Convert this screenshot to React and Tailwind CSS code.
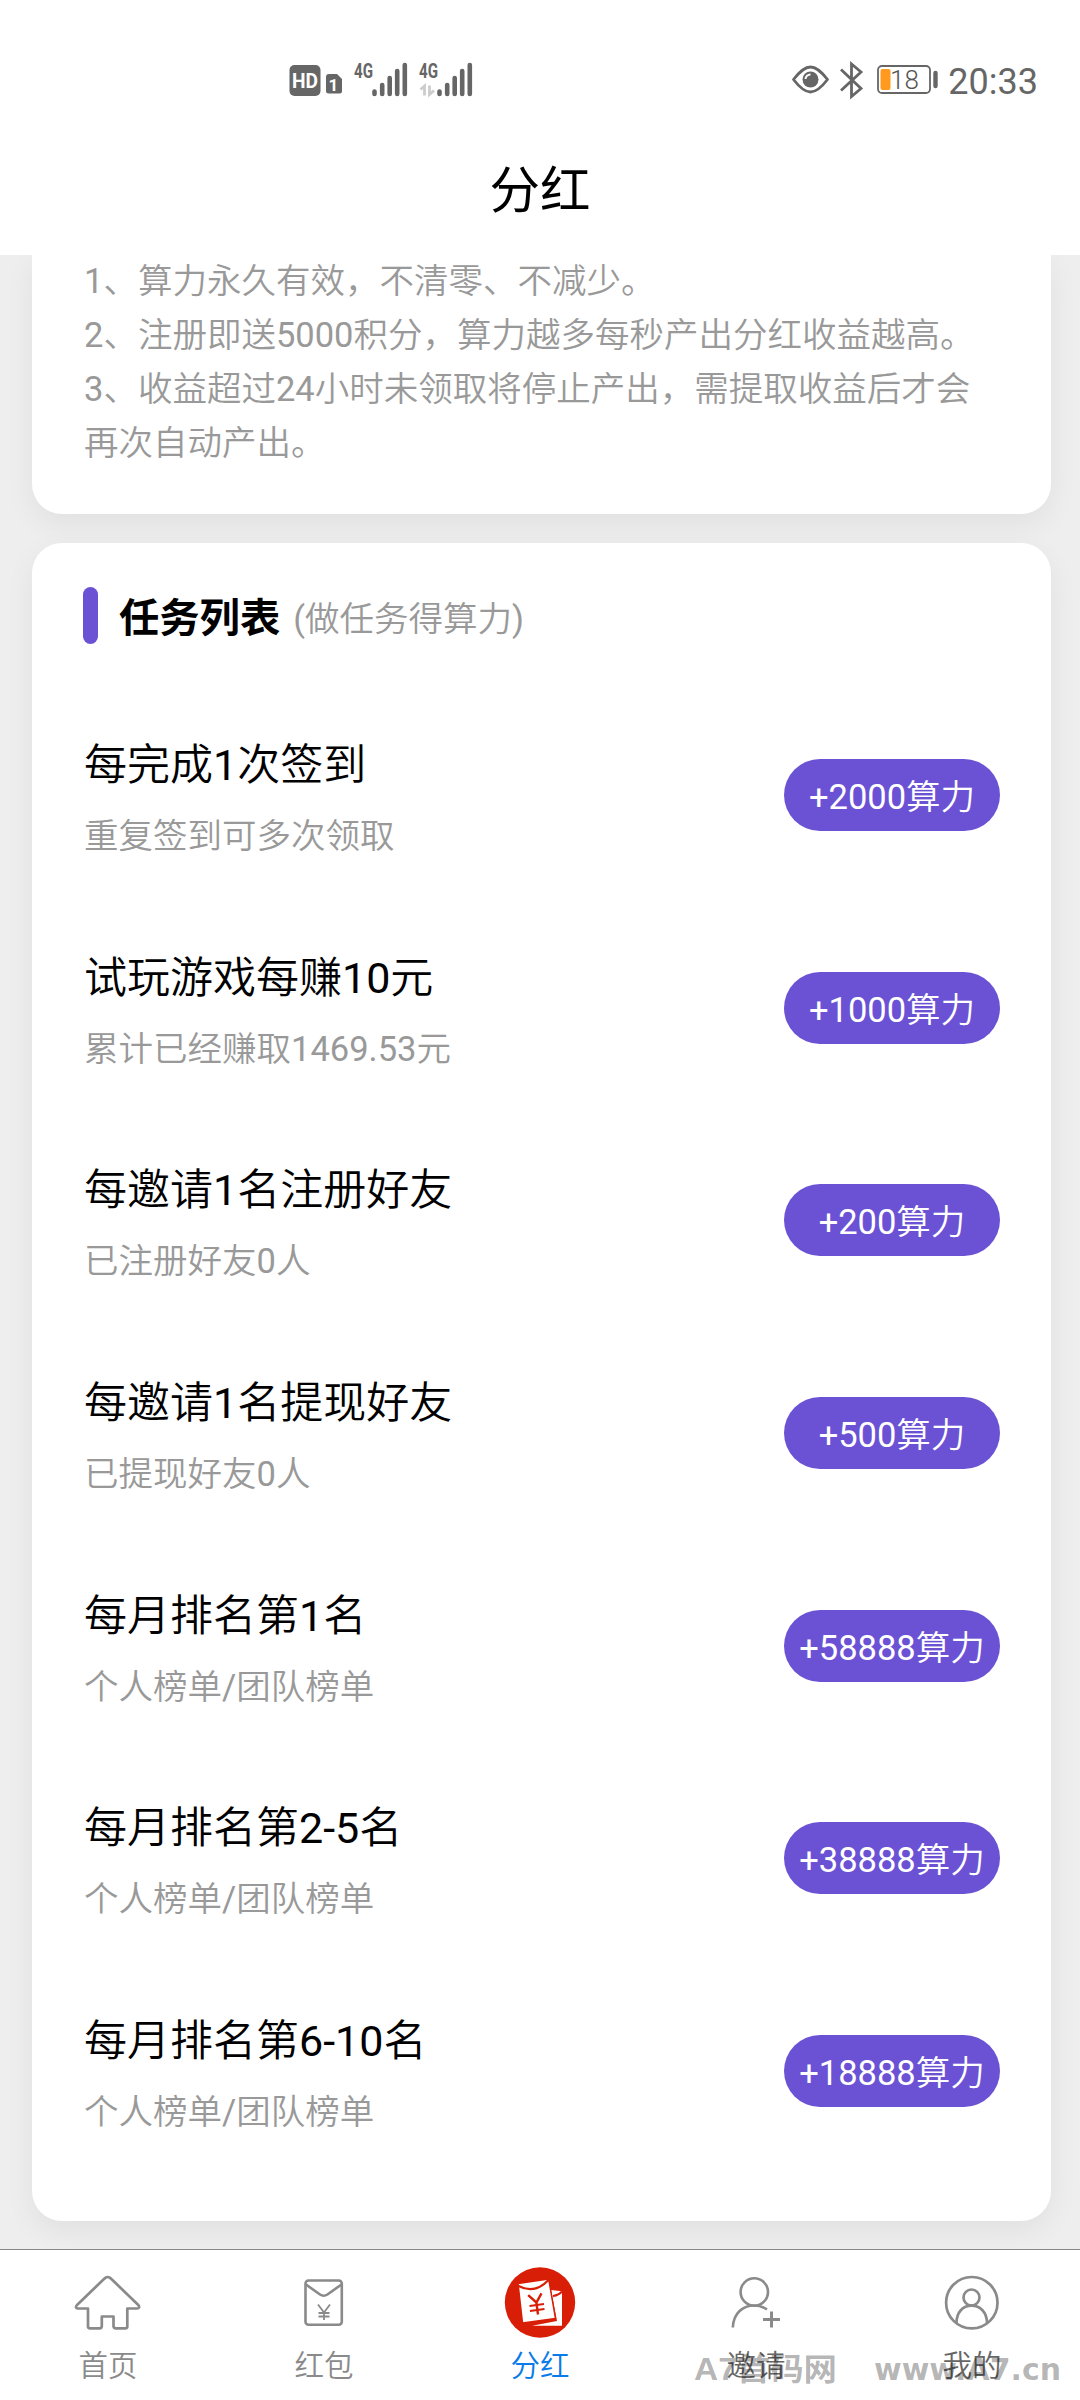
import React from "react";

const FONT = "font-[Roboto,'Noto_Sans_CJK_SC_DemiLight','Noto_Sans_CJK_SC',sans-serif]";

const rules = [
  "1、算力永久有效，不清零、不减少。",
  "2、注册即送5000积分，算力越多每秒产出分红收益越高。",
  "3、收益超过24小时未领取将停止产出，需提取收益后才会",
  "再次自动产出。",
];

const tasks = [
  { title: "每完成1次签到", note: "重复签到可多次领取", reward: "+2000算力" },
  { title: "试玩游戏每赚10元", note: "累计已经赚取1469.53元", reward: "+1000算力" },
  { title: "每邀请1名注册好友", note: "已注册好友0人", reward: "+200算力" },
  { title: "每邀请1名提现好友", note: "已提现好友0人", reward: "+500算力" },
  { title: "每月排名第1名", note: "个人榜单/团队榜单", reward: "+58888算力" },
  { title: "每月排名第2-5名", note: "个人榜单/团队榜单", reward: "+38888算力" },
  { title: "每月排名第6-10名", note: "个人榜单/团队榜单", reward: "+18888算力" },
];

function SignalIcons() {
  return (
    <svg width="190" height="50" viewBox="0 0 190 50" fill="#666">
      <rect x="0.5" y="10" width="31" height="31" rx="5" />
      <text x="16" y="33.3" textAnchor="middle" textLength="26" lengthAdjust="spacingAndGlyphs" fontFamily="Roboto" fontWeight="700" fontSize="21" fill="#fff">HD</text>
      <path d="M40 19h8l5 5v12a2.5 2.5 0 0 1-2.5 2.5h-11A2.500 2.500 0 0 1 37 36V22a3 3 0 0 1 3-3z" />
      <text x="44.500" y="36" textAnchor="middle" fontFamily="Roboto" fontWeight="700" fontSize="17" fill="#fff">1</text>
      <Bars x={0} />
      <Bars x={65} />
      <path d="M131.500 34.500l4-3.500v9.500M140.500 30.500v9l4.500-4" fill="none" stroke="#ccc" strokeWidth="2.800" />
    </svg>
  );
}

function Bars({ x }) {
  return (
    <g transform={`translate(${x} 0)`}>
      <text x="65" y="22.500" textLength="19" lengthAdjust="spacingAndGlyphs" fontFamily="Roboto" fontWeight="700" fontSize="20">4G</text>
      <g stroke="#666" strokeWidth="4.600" strokeLinecap="round">
        <path d="M85.500 36.500v2.500M93.200 30v9M100.700 23v16M108.200 16v23M115.800 10v29" />
      </g>
    </g>
  );
}

function DeviceIcons() {
  return (
    <svg width="150" height="50" viewBox="0 0 150 50" fill="none" stroke="#666" strokeWidth="2.800">
      <path d="M1.500 24.500C8 16 13 12 18.500 12S29 16 35.500 24.500C29 33 24 37 18.500 37S8 33 1.500 24.500z" strokeLinejoin="round" />
      <circle cx="18.500" cy="24.500" r="8" fill="#666" stroke="none" />
      <path d="M13.500 24a5 5 0 0 1 5-4.500" stroke="#fff" strokeWidth="2" />
      <path d="M49 14.500l20 19-9.500 8V9l9.500 8-20 18.500" strokeWidth="2.800" />
      <rect x="86" y="11" width="52" height="27" rx="4" strokeWidth="1.800" />
      <rect x="88.500" y="14" width="10" height="21" rx="2" fill="#ff9a1f" stroke="none" />
      <path d="M143.500 18v13" strokeWidth="4.400" strokeLinecap="round" />
      <text x="98" y="34" fontFamily="Roboto" fontWeight="300" fontSize="26" textLength="29" fill="#555" stroke="none">18</text>
    </svg>
  );
}

function HomeIcon() {
  return (
    <svg width="80" height="80" viewBox="0 0 80 80" fill="none" stroke="#8a8a8a" strokeWidth="2.700" strokeLinejoin="round">
      <path d="M36 16Q39.700 12 43.400 16L70.300 42Q72.500 45.500 69 45.500H59.300V63.500Q59.300 65.300 57.500 65.300H48Q45.500 65.300 45.500 63V53.500H33.800V63Q33.800 65.300 31.500 65.300H22Q20 65.300 20 63.500V45.500H10Q6.500 45 9 42Z" />
    </svg>
  );
}

function PacketIcon() {
  return (
    <svg width="80" height="80" viewBox="0 0 80 80" fill="none" stroke="#8a8a8a" strokeWidth="2.600">
      <rect x="21.500" y="17.500" width="36.300" height="44.300" rx="3" />
      <path d="M22 21.500L36 31.500Q39.700 34 43.400 31.500L57.500 21.500" />
      <path d="M34 41.500L40 49.500 46 41.500M40 49.500V57M34.500 50H45.500M34.500 53.500H45.500" strokeWidth="1.800" />
    </svg>
  );
}

function DividendIcon() {
  return (
    <svg width="80" height="80" viewBox="0 0 80 80">
      <circle cx="40" cy="39.500" r="35.200" fill="#d81e06" />
      <path d="M51 27L62 28.200V62.800H32L57 58Z" fill="#fff" />
      <path d="M18 20.500L48.700 16L55.500 55.500L22.500 60Z" fill="#fff" stroke="#d81e06" strokeWidth="1.500" />
      <path d="M18.500 23Q35 31.500 48.500 17" fill="none" stroke="#d81e06" strokeWidth="2.200" />
      <path d="M53 33Q59 32 62 28.500" fill="none" stroke="#d81e06" strokeWidth="2" />
      <path d="M28.200 32.200L36.400 39.500 41.500 30.300M36.400 39.500L38 51.500" fill="none" stroke="#d81e06" strokeWidth="2.400" />
      <path d="M29.500 43L44 41M30 48L44.500 46" fill="none" stroke="#d81e06" strokeWidth="1.900" />
    </svg>
  );
}

function InviteIcon() {
  return (
    <svg width="80" height="80" viewBox="0 0 80 80" fill="none" stroke="#8a8a8a" strokeWidth="2.600">
      <circle cx="38.300" cy="29" r="13.700" />
      <path d="M16.800 64.500C17.500 50 27 42.500 38.300 42.500Q45 42.500 51 46.500" />
      <path d="M47 56.500H64M55.500 48.500V64.500" strokeWidth="3" />
    </svg>
  );
}

function ProfileIcon() {
  return (
    <svg width="80" height="80" viewBox="0 0 80 80" fill="none" stroke="#8a8a8a" strokeWidth="2.700">
      <circle cx="39.800" cy="39.700" r="25.700" />
      <circle cx="39.500" cy="34.500" r="8" />
      <path d="M24.500 60C24.500 49 31 42.700 39.500 42.700S55 49 55 60" />
    </svg>
  );
}

const tabs = [
  { label: "首页", Icon: HomeIcon },
  { label: "红包", Icon: PacketIcon },
  { label: "分红", Icon: DividendIcon, active: true },
  { label: "邀请", Icon: InviteIcon, dark: true },
  { label: "我的", Icon: ProfileIcon, dark: true },
];

function TaskRow({ title, note, reward }) {
  return (
    <li className="flex h-[212.600px] items-center justify-between">
      <div className="flex flex-col pl-px pt-[11px]">
        <span className="h-[71px] text-[43px] leading-[72px] text-black">{title}</span>
        <span className="h-[72px] text-[34.500px] leading-[72px] text-[#999]">{note}</span>
      </div>
      <button className="h-[72px] w-[216px] whitespace-nowrap rounded-full bg-[#6b52d5] pt-[4px] text-center text-[34.500px] leading-[68px] text-white">
        {reward}
      </button>
    </li>
  );
}

export default function App() {
  return (
    <div className={`relative flex h-[2400px] w-[1080px] flex-col overflow-hidden bg-[#eee] ${FONT}`}>
      <header className="z-10 h-[255px] shrink-0 bg-white">
        <div className="flex h-[130px] items-start justify-between pl-[289px] pr-[42px] pt-[55px]">
          <SignalIcons />
          <div className="flex">
            <DeviceIcons />
            <span className="ml-[6px] text-[36px] leading-[55px] text-[#666]">20:33</span>
          </div>
        </div>
        <h1 className="text-center font-['Noto_Sans_CJK_SC',sans-serif] text-[50.500px] leading-[112px] text-black">分红</h1>
      </header>

      <main className="flex h-[1994px] shrink-0 flex-col gap-[29px] overflow-hidden pl-8 pr-[29px]">
        <section className="h-[259px] shrink-0 rounded-b-[30px] bg-white pl-[52px] shadow-[0_10px_30px_rgba(0,0,0,0.060)]">
          {rules.map((line) => (
            <p key={line} className="relative -top-px whitespace-nowrap text-[34.500px] leading-[54px] text-[#999]">{line}</p>
          ))}
        </section>

        <section className="h-[1678px] shrink-0 rounded-[30px] bg-white px-[51px] pt-[44px] shadow-[0_10px_30px_rgba(0,0,0,0.060)]">
          <div className="flex h-[58px] items-start">
            <span className="h-[57px] w-[15px] rounded-full bg-[#6b52d5]" />
            <h2 className="ml-[21px] font-['Noto_Sans_CJK_SC',sans-serif] text-[40.300px] font-bold leading-[55px] text-black">任务列表</h2>
            <span className="ml-[13px] pt-[3px] text-[34.500px] leading-[58px] text-[#999]">(做任务得算力)</span>
          </div>
          <ul className="mt-[44px]">
            {tasks.map((task) => (
              <TaskRow key={task.title} {...task} />
            ))}
          </ul>
        </section>
      </main>

      <nav className="z-10 grid h-[151px] shrink-0 grid-cols-5 border-t border-[#888] bg-white pt-[13px]">
        {tabs.map(({ label, Icon, active, dark }) => (
          <div key={label} className="flex flex-col items-center">
            <Icon />
            <span className={`text-[29.500px] leading-[46px] ${active ? "text-[#0a7be8]" : dark ? "text-[#666]" : "text-[#8a8a8a]"}`}>
              {label}
            </span>
          </div>
        ))}
      </nav>

      <div className="pointer-events-none absolute bottom-[13px] left-[694px] z-20 flex w-[367px] justify-between text-[31px] font-bold leading-[38px] text-black/30">
        <svg className="overflow-visible" width="144" height="38" viewBox="0 0 144 38" fill="currentColor">
          <text x="0" y="31" textLength="143" lengthAdjust="spacingAndGlyphs" fontFamily="'Liberation Sans','Noto Sans CJK SC',sans-serif">A7首码网</text>
        </svg>
        <svg className="overflow-visible" width="188" height="38" viewBox="0 0 188 38" fill="currentColor">
          <text x="1" y="31" textLength="187" lengthAdjust="spacingAndGlyphs" fontFamily="'DejaVu Sans',sans-serif">www.A7.cn</text>
        </svg>
      </div>
    </div>
  );
}
